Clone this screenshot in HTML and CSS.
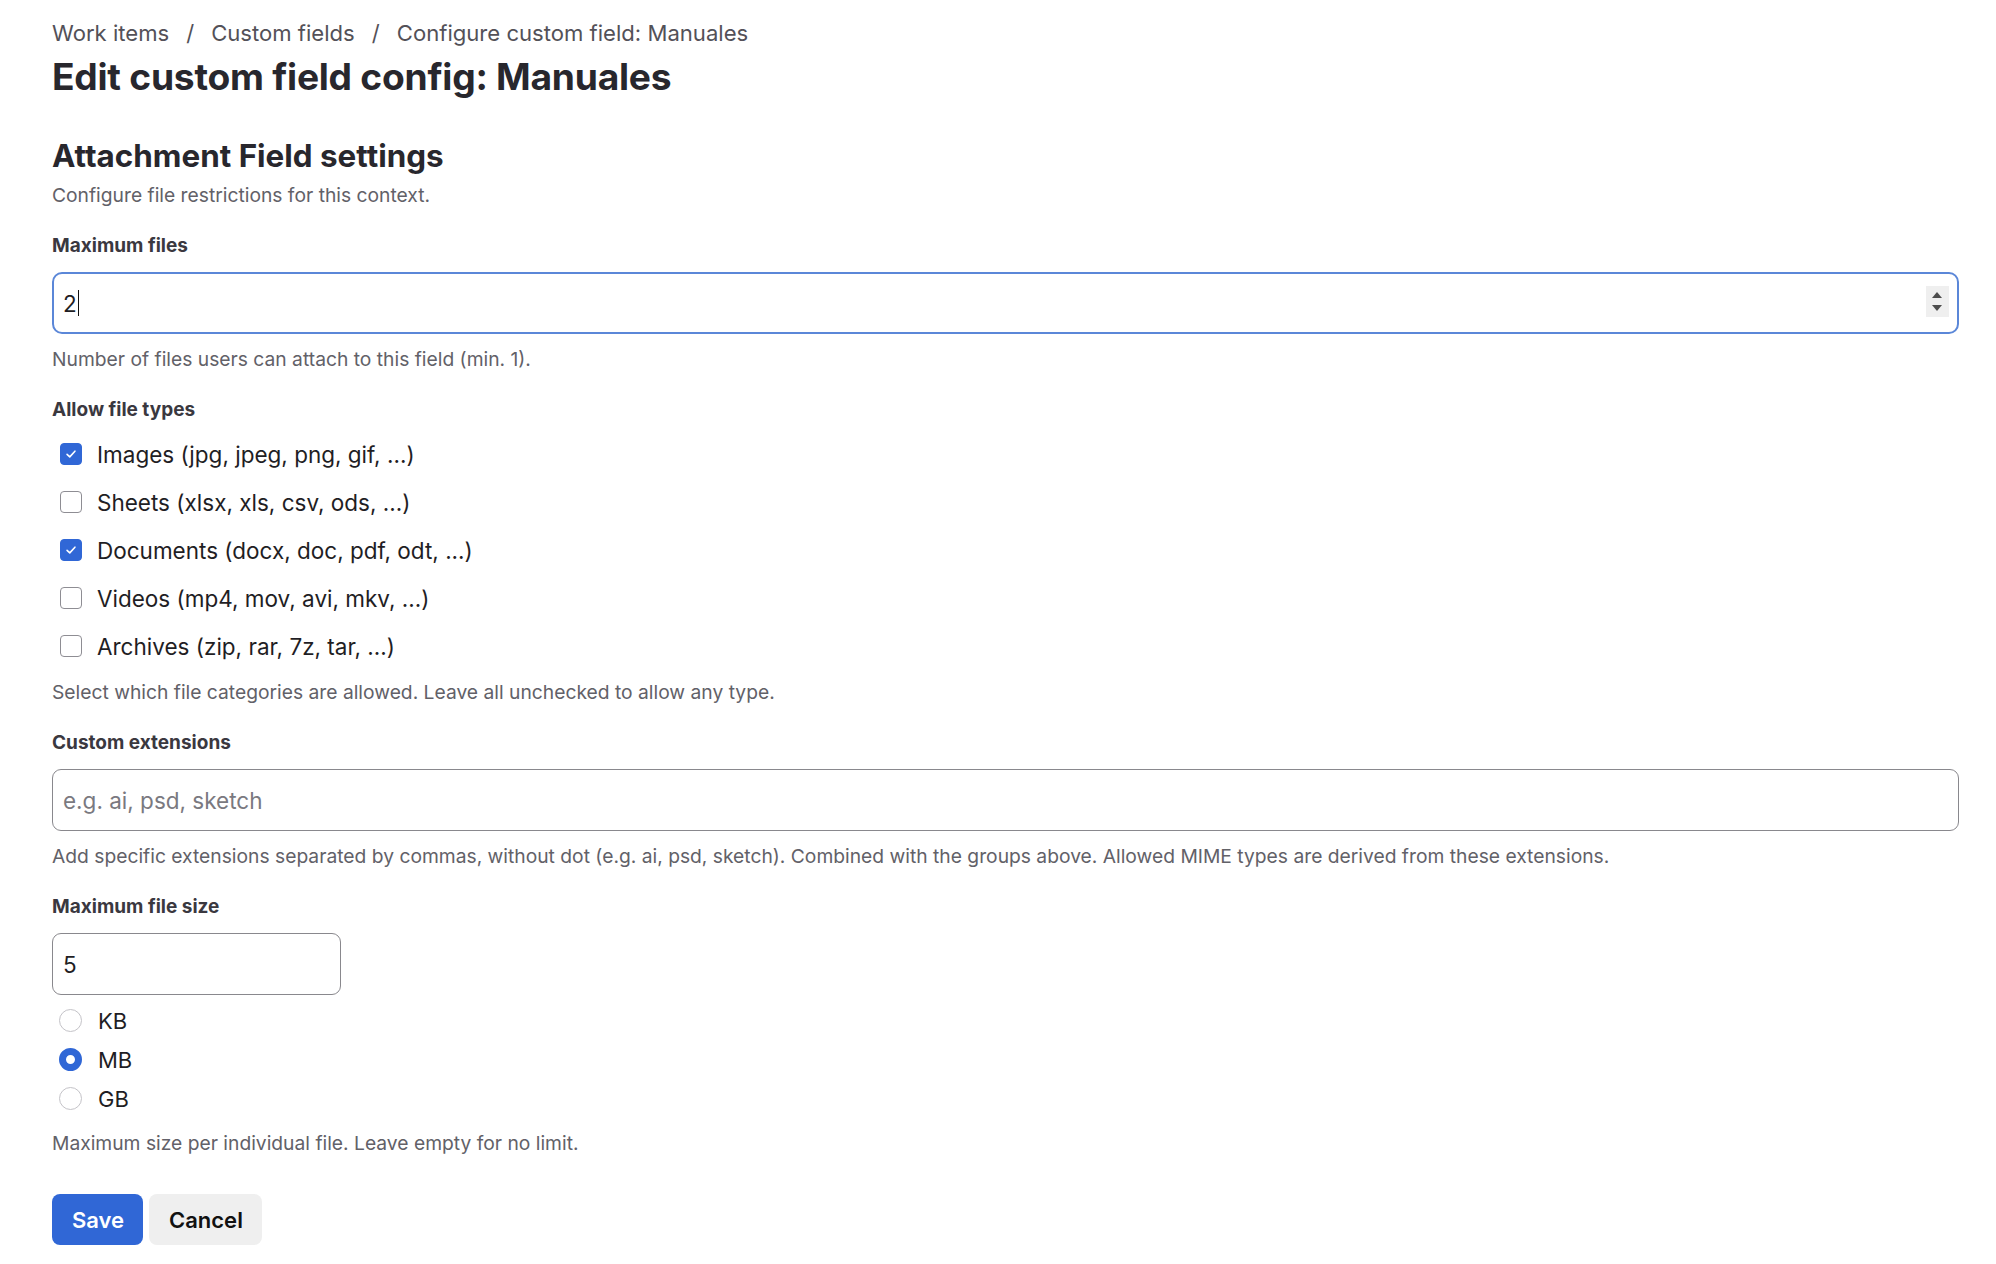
FILE: index.html
```html
<!DOCTYPE html>
<html lang="en">
<head>
<meta charset="utf-8">
<title>Edit custom field config: Manuales</title>
<link rel="stylesheet" href="styles.css">
</head>
<body>
<main class="page">
  <nav class="breadcrumb">
    <span class="crumb">Work items</span><span class="sep">/</span><span class="crumb">Custom fields</span><span class="sep">/</span><span class="crumb">Configure custom field: Manuales</span>
  </nav>
  <h1 class="title">Edit custom field config: Manuales</h1>

  <section class="settings">
    <h2 class="section-title">Attachment Field settings</h2>
    <p class="section-desc">Configure file restrictions for this context.</p>

    <div class="field">
      <div class="label">Maximum files</div>
      <div class="input input-focus">
        <span class="value">2</span><span class="caret"></span>
        <span class="spinner"><span class="tri-up"></span><span class="tri-down"></span></span>
      </div>
      <p class="help">Number of files users can attach to this field (min. 1).</p>
    </div>

    <div class="field">
      <div class="label">Allow file types</div>
      <div class="check-list">
        <div class="check-row"><span class="checkbox checked"><svg viewBox="0 0 16 16" width="14" height="14"><path d="M3.5 8.4 L6.6 11.3 L12.5 4.8" fill="none" stroke="#fff" stroke-width="1.8" stroke-linecap="round" stroke-linejoin="round"/></svg></span><span class="opt">Images (jpg, jpeg, png, gif, ...)</span></div>
        <div class="check-row"><span class="checkbox"></span><span class="opt">Sheets (xlsx, xls, csv, ods, ...)</span></div>
        <div class="check-row"><span class="checkbox checked"><svg viewBox="0 0 16 16" width="14" height="14"><path d="M3.5 8.4 L6.6 11.3 L12.5 4.8" fill="none" stroke="#fff" stroke-width="1.8" stroke-linecap="round" stroke-linejoin="round"/></svg></span><span class="opt">Documents (docx, doc, pdf, odt, ...)</span></div>
        <div class="check-row"><span class="checkbox"></span><span class="opt">Videos (mp4, mov, avi, mkv, ...)</span></div>
        <div class="check-row"><span class="checkbox"></span><span class="opt">Archives (zip, rar, 7z, tar, ...)</span></div>
      </div>
      <p class="help help-tight">Select which file categories are allowed. Leave all unchecked to allow any type.</p>
    </div>

    <div class="field">
      <div class="label">Custom extensions</div>
      <div class="input"><span class="placeholder">e.g. ai, psd, sketch</span></div>
      <p class="help">Add specific extensions separated by commas, without dot (e.g. ai, psd, sketch). Combined with the groups above. Allowed MIME types are derived from these extensions.</p>
    </div>

    <div class="field">
      <div class="label">Maximum file size</div>
      <div class="input input-small"><span class="value">5</span></div>
      <div class="radio-list">
        <div class="radio-row"><span class="radio"></span><span class="opt">KB</span></div>
        <div class="radio-row"><span class="radio checked"></span><span class="opt">MB</span></div>
        <div class="radio-row"><span class="radio"></span><span class="opt">GB</span></div>
      </div>
      <p class="help help-size">Maximum size per individual file. Leave empty for no limit.</p>
    </div>

    <div class="actions">
      <button class="btn btn-primary" type="button">Save</button>
      <button class="btn btn-default" type="button">Cancel</button>
    </div>
  </section>
</main>
</body>
</html>
```

FILE: styles.css
```css
* { box-sizing: border-box; }

html, body {
  margin: 0;
  padding: 0;
  background: #ffffff;
}

body {
  font-family: "Inter", "Noto Sans", "Liberation Sans", sans-serif;
  color: #1f1e24;
}

.page {
  padding: 18px 37px 0 52px;
}

.breadcrumb {
  display: flex;
  align-items: center;
  height: 30px;
  font-size: 22.1px;
  color: #535158;
}

.breadcrumb .sep {
  margin: 0 17px;
  color: #535158;
}

.title {
  margin: 7px 0 0;
  font-size: 37.2px;
  line-height: 44px;
  font-weight: 700;
  color: #28272d;
  letter-spacing: -0.25px;
}

.settings {
  margin-top: 38px;
}

.section-title {
  margin: 0;
  font-size: 31.4px;
  line-height: 38px;
  font-weight: 700;
  color: #28272d;
}

.section-desc {
  margin: 7px 0 0;
  font-size: 19.25px;
  line-height: 26px;
  color: #626168;
}

.field {
  margin-top: 25px;
}

.label {
  font-size: 19px;
  line-height: 26px;
  font-weight: 700;
  color: #3a383f;
}

.input {
  position: relative;
  display: flex;
  align-items: center;
  height: 62px;
  margin-top: 13px;
  padding: 0 10px;
  border: 1.5px solid #89888d;
  border-radius: 9px;
  font-size: 22.5px;
  color: #1f1e24;
  background: #fff;
}

.input-focus {
  height: 62px;
  border: 2.5px solid #5b87d8;
  border-radius: 10px;
  padding-left: 9px;
}

.input-small {
  width: 289px;
}

.placeholder {
  color: #7a7980;
}

.caret {
  display: inline-block;
  width: 1.5px;
  height: 26px;
  margin-left: 1px;
  background: #111;
}

.spinner {
  position: absolute;
  right: 8.5px;
  top: 12px;
  width: 23px;
  height: 31px;
  background: #efefef;
  display: flex;
  flex-direction: column;
  align-items: center;
  justify-content: center;
  gap: 7px;
}

.tri-up {
  width: 0;
  height: 0;
  border-left: 5.5px solid transparent;
  border-right: 5.5px solid transparent;
  border-bottom: 6px solid #4d4d4d;
}

.tri-down {
  width: 0;
  height: 0;
  border-left: 5.5px solid transparent;
  border-right: 5.5px solid transparent;
  border-top: 6px solid #4d4d4d;
}

.help {
  margin: 12px 0 0;
  font-size: 19.25px;
  line-height: 26px;
  color: #626168;
}

.help-tight {
  margin-top: 9px;
}

.help-size {
  margin-top: 12px;
}

.check-list {
  margin-top: 7px;
  display: flex;
  flex-direction: column;
}

.check-row {
  display: flex;
  align-items: center;
  height: 48px;
  padding-left: 8px;
}

.checkbox {
  width: 22px;
  height: 22px;
  border: 1.5px solid #8e8d93;
  border-radius: 4px;
  background: #fff;
  display: flex;
  align-items: center;
  justify-content: center;
  flex: none;
}

.checkbox.checked {
  background: #3067d6;
  border-color: #3067d6;
}

.opt {
  margin-left: 15px;
  font-size: 22.5px;
  color: #1f1e24;
}

.radio-list {
  margin-top: 6px;
  display: flex;
  flex-direction: column;
}

.radio-row {
  display: flex;
  align-items: center;
  height: 39px;
  padding-left: 7px;
}

.radio {
  width: 23px;
  height: 23px;
  border: 1.5px solid #c4c3c8;
  border-radius: 50%;
  background: #fff;
  flex: none;
}

.radio.checked {
  border: 7.5px solid #3067d6;
  background: #fff;
}

.radio-row .opt {
  margin-left: 16px;
  font-size: 22px;
}

.actions {
  display: flex;
  gap: 6px;
  margin-top: 38px;
}

.btn {
  height: 51px;
  padding: 0 20px;
  border: none;
  border-radius: 8px;
  font-family: "Inter", "Noto Sans", "Liberation Sans", sans-serif;
  font-size: 22px;
  font-weight: 600;
  cursor: pointer;
}

.btn-primary {
  width: 91px;
  background: #3067d6;
  color: #fff;
}

.btn-default {
  width: 113px;
  background: #efefef;
  color: #111;
}
```
